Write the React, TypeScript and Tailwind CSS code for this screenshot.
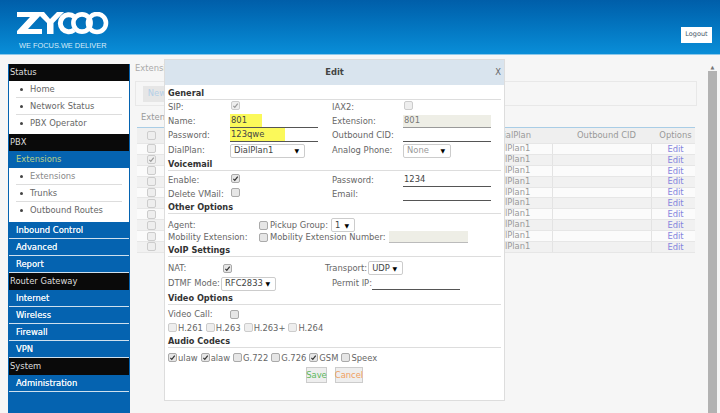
import type { ReactNode } from 'react'

const FONT = "font-['DejaVu_Sans',Verdana,sans-serif]"

function Check({ on, dim }: { on?: boolean; dim?: boolean }) {
    return (
        <span className={`inline-flex w-[9px] h-[9px] shrink-0 items-center justify-center rounded-[2px] border ${dim ? 'border-[#ccc] bg-[#eee]' : 'border-[#aaa] bg-[#e6e6e6]'}`}>
            {on && (
                <svg viewBox="0 0 10 10" className="w-[9px] h-[9px]">
                    <path d="M2 5.4 L4 7.6 L8.2 2.2" fill="none" stroke={dim ? '#999' : '#333'} strokeWidth="1.7" />
                </svg>
            )}
        </span>
    )
}

function Select({ value, w, muted }: { value: string; w: string; muted?: boolean }) {
    return (
        <span className={`inline-flex h-[14px] items-center justify-between rounded-[2px] border border-[#ccc] bg-white pl-[3px] pr-[5px] ${w} ${muted ? 'text-[#999]' : 'text-[#444]'}`}>
            {value}
            <span className="text-[6px] text-black">▼</span>
        </span>
    )
}

function Section({ children, className }: { children: ReactNode; className: string }) {
    return <div className={`h-[12px] border-b border-[#ddd] text-[8.2px] leading-[11px] font-bold text-[#333] ${className}`}>{children}</div>
}

function Field({ value, mark, w = 'w-[88px]' }: { value?: string; mark?: string; w?: string }) {
    return (
        <span className={`flex h-[13px] items-center border-b border-[#555] ${w}`}>
            <span className={`pl-[1px] text-[#444] ${mark ?? ''}`}>{value}</span>
        </span>
    )
}

function Row({ a, b, c, d, h = 'h-[14px]' }: { a: string; b: ReactNode; c?: string; d?: ReactNode; h?: string }) {
    return (
        <div className={`grid grid-cols-[62px_102px_71px_1fr] items-center whitespace-nowrap ${h}`}>
            <span>{a}</span>
            <span className="flex">{b}</span>
            <span>{c}</span>
            <span className="flex">{d}</span>
        </div>
    )
}

function Codec({ label, on, dim, className }: { label: string; on?: boolean; dim?: boolean; className?: string }) {
    return (
        <span className={`flex items-center gap-[1px] ${className ?? ''}`}>
            <Check on={on} dim={dim} />
            {label}
        </span>
    )
}

function EditModal() {
    return (
        <div className="absolute left-[164px] top-[59px] h-[342px] w-[341px] border border-[#ddd] bg-white text-[8.4px] text-[#666]">
            <div className="relative flex h-[25px] items-center justify-center bg-[#d9e4ee] text-[8.4px] font-bold text-[#444]">
                Edit
                <span className="absolute right-[3px] font-normal text-[#666]">X</span>
            </div>
            <div className="px-[3px]">
                <Section className="mt-[3px]">General</Section>
                <Row a="SIP:" b={<span className="ml-[1px]"><Check on dim /></span>} c="IAX2:" d={<span className="ml-[1px]"><Check dim /></span>} />
                <Row a="Name:" b={<Field value="801" mark="bg-[#fbf95a] w-[32px]" />} c="Extension:" d={<span className="flex h-[13px] w-[88px] items-center border-b border-[#999] bg-[#eeeee6] pl-[1px] text-[#777]">801</span>} />
                <Row a="Password:" b={<Field value="123qwe" mark="bg-[#fbf95a] w-[55px]" />} c="Outbound CID:" d={<Field />} />
                <Row h="h-[17px]" a="DialPlan:" b={<Select value="DialPlan1" w="w-[75px]" />} c="Analog Phone:" d={<Select value="None" w="w-[48px]" muted />} />
                <Section className="">Voicemail</Section>
                <div className="mt-[2px]">
                    <Row a="Enable:" b={<span className="ml-[1px]"><Check on /></span>} c="Password:" d={<Field value="1234" />} />
                    <Row a="Delete VMail:" b={<span className="ml-[1px]"><Check /></span>} c="Email:" d={<Field />} />
                </div>
                <Section className="mt-[1px]">Other Options</Section>
                <div className="mt-[5px] flex h-[12px] items-center whitespace-nowrap">
                    <span className="w-[91px]">Agent:</span>
                    <Check />
                    <span className="ml-[2px]">Pickup Group:</span>
                    <span className="ml-[3px]"><Select value="1" w="w-[24px]" /></span>
                </div>
                <div className="flex h-[12px] items-center whitespace-nowrap">
                    <span className="w-[91px]">Mobility Extension:</span>
                    <Check />
                    <span className="ml-[2px]">Mobility Extension Number:</span>
                    <span className="ml-[3px] h-[12px] w-[79px] border-b border-[#bbb] bg-[#eeeee6]" />
                </div>
                <Section className="mt-[2px]">VoIP Settings</Section>
                <div className="mt-[3px] flex h-[16px] items-center whitespace-nowrap">
                    <span className="w-[55px]">NAT:</span>
                    <Check on />
                    <span className="ml-[93px]">Transport:</span>
                    <span className="ml-[1px]"><Select value="UDP" w="w-[35px]" /></span>
                </div>
                <div className="flex h-[15px] items-center whitespace-nowrap">
                    <span className="w-[53px]">DTMF Mode:</span>
                    <Select value="RFC2833" w="w-[55px]" />
                    <span className="ml-[56px]">Permit IP:</span>
                    <Field w="w-[88px]" />
                </div>
                <Section className="mt-[2px]">Video Options</Section>
                <div className="mt-[2px] flex h-[14px] items-center">
                    <span className="w-[62px]">Video Call:</span>
                    <Check />
                </div>
                <div className="flex h-[14px] items-center gap-[3px]">
                    <Codec label="H.261" dim />
                    <Codec label="H.263" dim />
                    <Codec label="H.263+" dim />
                    <Codec label="H.264" dim />
                </div>
                <Section className="mt-[1px]">Audio Codecs</Section>
                <div className="mt-[3px] flex h-[14px] items-center gap-[3px]">
                    <Codec label="ulaw" on />
                    <Codec label="alaw" on />
                    <Codec label="G.722" />
                    <Codec label="G.726" />
                    <Codec label="GSM" on />
                    <Codec label="Speex" />
                </div>
                <div className="mt-[2px] flex justify-center gap-[8px]">
                    <span className="flex h-[16px] w-[21px] items-center justify-center border border-[#ccc] bg-[#eee] text-[#5cb85c]">Save</span>
                    <span className="flex h-[16px] w-[28px] items-center justify-center border border-[#ccc] bg-[#eee] text-[#f0a060]">Cancel</span>
                </div>
            </div>
        </div>
    )
}

function Black({ children }: { children: ReactNode }) {
    return <div className="flex h-[17px] items-center bg-[#0a0a0a] pl-[1px] text-[#ddd]">{children}</div>
}

function Blue({ children, dim }: { children: ReactNode; dim?: boolean }) {
    return <div className={`flex h-[17px] items-center border-b bg-[#0563b0] pl-[7px] [text-shadow:0_0_0.6px_#fff] ${dim ? 'border-transparent text-[#b8d08a] [text-shadow:none]' : 'border-[#cfe0ee] text-[#eef4fa]'}`}>{children}</div>
}

function Sub({ children, dim }: { children: ReactNode; dim?: boolean }) {
    return (
        <div className="mx-[7px] flex h-[17px] items-center border-b border-[#ddd] pl-[4px] last:border-b-0">
            <span className="h-[3px] w-[3px] rounded-full bg-[#444]" />
            <span className={`ml-[7px] ${dim ? 'text-[#888]' : 'text-[#666]'}`}>{children}</span>
        </div>
    )
}

function Sidebar() {
    return (
        <nav className="h-[349px] w-[122px] shrink-0 border-x border-[#0563b0] bg-[#0563b0] text-[8.4px]">
            <Black>Status</Black>
            <div className="h-[53px] bg-white">
                <Sub>Home</Sub>
                <Sub>Network Status</Sub>
                <Sub>PBX Operator</Sub>
            </div>
            <Black>PBX</Black>
            <Blue dim>Extensions</Blue>
            <div className="h-[54px] bg-white">
                <Sub dim>Extensions</Sub>
                <Sub>Trunks</Sub>
                <Sub>Outbound Routes</Sub>
            </div>
            <Blue>Inbound Control</Blue>
            <Blue>Advanced</Blue>
            <Blue>Report</Blue>
            <Black>Router Gateway</Black>
            <Blue>Internet</Blue>
            <Blue>Wireless</Blue>
            <Blue>Firewall</Blue>
            <Blue>VPN</Blue>
            <Black>System</Black>
            <Blue>Administration</Blue>
        </nav>
    )
}

function Logo() {
    return (
        <svg viewBox="0 0 92 23" className="h-[23px] w-[92px]">
            <path d="M0 0 H24 V3 L11 17 H25 V22 H0 V19 L13 5 H0 Z" fill="#fff" />
            <path d="M19 0 H27 L33 7 L40 0 H47 L36.5 11 V22 H30 V11 Z" fill="#fff" />
            <path d="M57 4.5 A8.5 8.5 0 1 0 57 18" fill="none" stroke="#fff" strokeWidth="5" />
            <circle cx="65" cy="11" r="8.6" fill="none" stroke="#fff" strokeWidth="4.6" />
            <circle cx="80" cy="11" r="9" fill="none" stroke="#fff" strokeWidth="4.6" />
        </svg>
    )
}

const ROWS = [0, 1, 2, 3, 4, 5, 6, 7, 8, 9]

function ExtTable() {
    return (
        <div className="mx-[2px] mt-[3px] border-t border-[#a9cde6] text-[8.4px] text-[#999]">
            <div className="flex h-[16px] items-center border-b border-[#e6e6e6] bg-[#efefef]">
                <span className="flex w-[28px] justify-center"><Check dim /></span>
                <span className="w-[310px] pl-[1px]">Extension</span>
                <span className="w-[78px] pl-[22px]">DialPlan</span>
                <span className="w-[99px] pl-[8px] text-center">Outbound CID</span>
                <span className="flex-1 pl-[4px] text-center">Options</span>
            </div>
            {ROWS.map(i => (
                <div key={i} className={`flex h-[10.9px] items-center border-b border-[#e6e6e6] leading-none ${i % 2 ? 'bg-[#f1f1f1]' : 'bg-[#fbfbfb]'}`}>
                    <span className="flex w-[28px] justify-center"><Check on={i === 1} dim /></span>
                    <span className="w-[310px]" />
                    <span className="h-full w-[78px] border-r border-[#e3e3e3] pl-[16px]">DialPlan1</span>
                    <span className="h-full w-[99px] border-r border-[#e3e3e3]" />
                    <span className="flex-1 pl-[4px] text-center text-[#8585dd]">Edit</span>
                </div>
            ))}
        </div>
    )
}

export default function App() {
    return (
        <div className={`relative h-[413px] w-[720px] overflow-hidden bg-[#f6f6f6] ${FONT}`}>
            <header className="relative flex h-[55px] items-start justify-between border-b-[1px] border-[#8cc8ea] bg-gradient-to-b from-[#005ea9] to-[#0a8ed8] pl-[17px] pr-[8px]">
                <div className="pt-[12px]">
                    <Logo />
                    <div className="mt-[6px] pl-[2px] font-['Liberation_Sans',sans-serif] text-[7.4px] leading-[9px] text-[#d8ecf8]">WE FOCUS.WE DELIVER</div>
                </div>
                <div className="mt-[27px] flex h-[16px] w-[31px] items-center justify-center bg-white text-[6.5px] text-[#456]">Logout</div>
            </header>
            <div className="flex pl-[8px] pt-[9px]">
                <Sidebar />
                <main className="ml-[5px] w-[562px] text-[8.4px] text-[#aaa]">
                    <div className="mt-[-2px] h-[13px] leading-[13px]">Extensions</div>
                    <div className="mt-[6px] flex h-[25px] w-[562px] items-center border border-[#e8e8e8] pl-[7px]">
                        <span className="flex h-[16px] w-[28px] items-center justify-center bg-[#e6e6e6] text-[#b4cfe6]">New</span>
                    </div>
                    <div className="mt-[5px] h-[13px] pl-[6px] leading-[13px] text-[#999]">Extensions</div>
                    <ExtTable />
                </main>
                <div className="ml-[9px] flex h-[349px] w-[13px] flex-col items-center">
                    <span className="h-[7px] text-[5px] leading-[7px] text-[#777]">▲</span>
                    <span className="h-full w-[9px] bg-[#b2b2b2]" />
                </div>
            </div>
            <EditModal />
        </div>
    )
}
